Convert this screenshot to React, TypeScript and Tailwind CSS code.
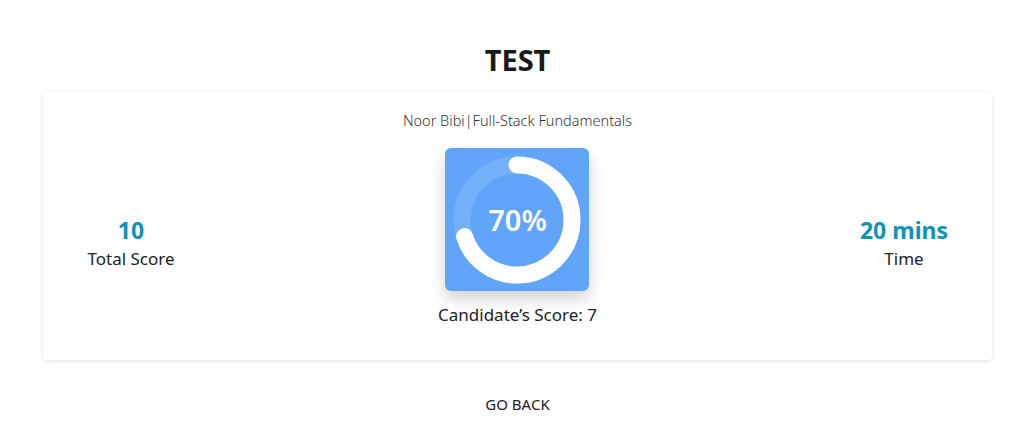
import React from "react"

function Stat({ value, label }: { value: string; label: string }) {
  return (
    <div className="w-[176px] mt-[66px] flex flex-col items-center">
      <span className="text-[23px] leading-[32px] font-bold text-[#0f93b6]">{value}</span>
      <span className="text-[17px] leading-[26px] text-[#222]">{label}</span>
    </div>
  )
}

function ScoreRing({ percent }: { percent: number }) {
  const r = 55
  const c = 2 * Math.PI * r
  return (
    <div className="w-[144px] h-[143px] rounded-md bg-[#60a5fa] flex items-center justify-center shadow-[0_8px_16px_rgba(0,0,0,0.18)]">
      <div className="relative w-[128px] h-[128px]">
        <svg width="128" height="128" viewBox="0 0 128 128" className="-rotate-90">
          <circle cx="64" cy="64" r={r} fill="none" stroke="rgba(255,255,255,0.12)" strokeWidth="17" />
          <circle
            cx="64"
            cy="64"
            r={r}
            fill="none"
            stroke="#fff"
            strokeWidth="17"
            strokeLinecap="round"
            strokeDasharray={`${(c * percent) / 100} ${c}`}
          />
        </svg>
        <span className="absolute inset-0 flex items-center justify-center text-white text-[29px] font-semibold">
          {percent}%
        </span>
      </div>
    </div>
  )
}

export default function App() {
  return (
    <div className="min-h-screen bg-white text-[#222] font-['Noto_Sans','Open_Sans',sans-serif]">
      <div className="ml-[43px] w-[949px]">
        <h1 className="pt-[40px] text-center text-[29px] leading-[40px] font-bold text-[#1a1a1a]">TEST</h1>
        <div className="mt-[12px] h-[268px] rounded bg-white shadow-[0_1px_4px_rgba(0,0,0,0.12)] pt-[18px]">
          <p className="text-center text-[14.5px] leading-[20px] font-light text-[#333]">Noor Bibi|Full-Stack Fundamentals</p>
          <div className="flex items-start justify-between mt-[18px]">
            <Stat value="10" label="Total Score" />
            <div className="flex flex-col items-center">
              <ScoreRing percent={70} />
              <span className="mt-[12px] text-[17px] leading-[24px] font-normal text-[#222]">Candidate’s Score: 7</span>
            </div>
            <Stat value="20 mins" label="Time" />
          </div>
        </div>
        <div className="mt-[32px] text-center">
          <button className="text-[15px] leading-[20px] uppercase text-[#222]">Go Back</button>
        </div>
      </div>
    </div>
  )
}
